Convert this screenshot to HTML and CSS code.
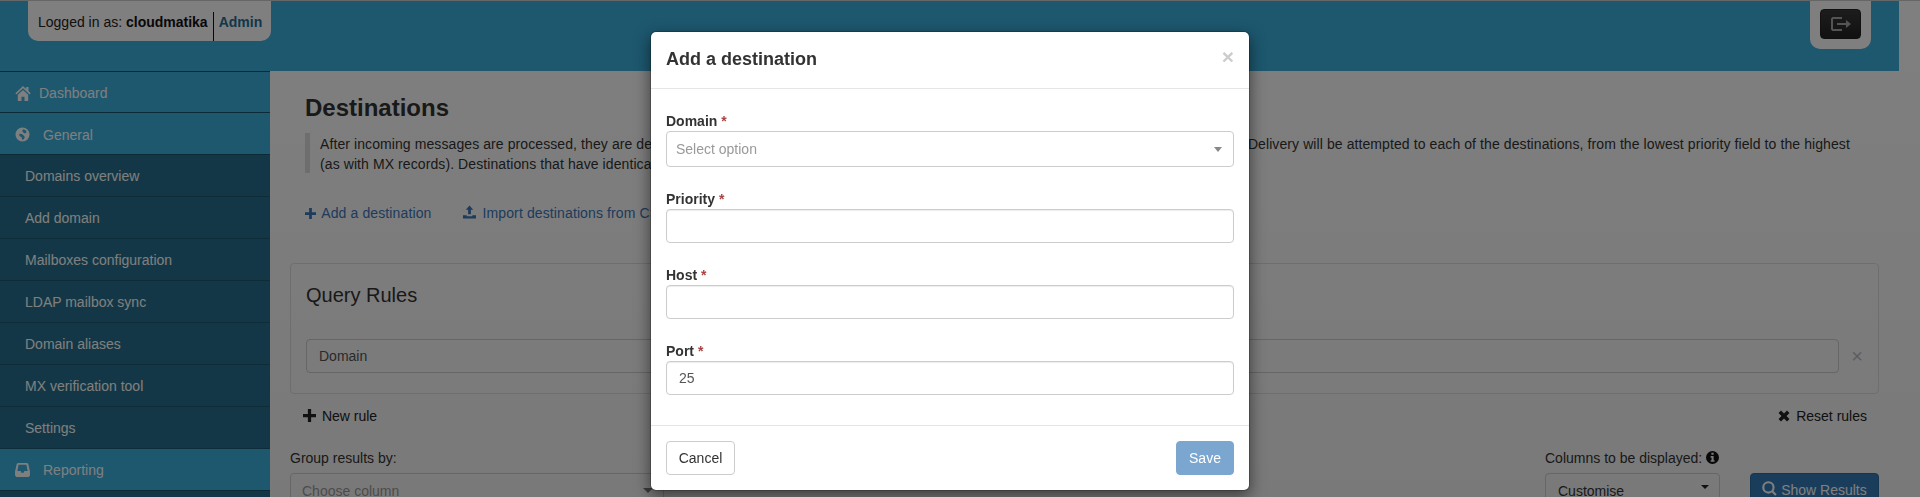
FILE: index.html
```html
<!DOCTYPE html>
<html lang="en">
<head>
    <meta charset="UTF-8">
    <title>Destinations</title>
    <link rel="stylesheet" href="styles.css">
</head>
<body>

<div class="top-line"></div>

<div class="page">
    <header class="topbar">
        <div class="user-box">
            <span>Logged in as: <b>cloudmatika</b></span>
            <span class="user-role">Admin</span>
        </div>
        <div class="logout-box">
            <button class="logout-btn">
                <svg class="icon" viewBox="0 0 20 14" width="20" height="14"><path fill="#a8a8a8" d="M0 1.500 1.500 0H11v2H2v10h9v2H1.500L0 12.500z"/><path fill="#a8a8a8" d="M6 6h9V3l5 4-5 4V8H6z"/></svg>
            </button>
        </div>
    </header>

    <div class="main">
        <nav class="sidebar">
            <a class="nav-item nav-first">
                <svg class="icon nav-icon" viewBox="0 0 16 15" width="16" height="15"><path fill="#fff" d="M8 0 .3 7.200l1.100 1.200L8 2.300l6.600 6.100 1.100-1.200L13.500 5.100V1h-2.300v1.900z"/><path fill="#fff" d="M8 3.900 2.800 8.700V15h3.700v-4.200h3V15h3.700V8.700z"/></svg>
                Dashboard
            </a>
            <a class="nav-item nav-gap nav-top">
                <svg class="icon nav-icon" viewBox="0 0 16 16" width="15" height="15"><path fill="#fff" fill-rule="evenodd" d="M8 .5a7.500 7.500 0 1 0 0 15 7.500 7.500 0 0 0 0-15zM9 2.500l2.800 1.200.4 2.300-1.700.8-1.700-1L7.600 4zM4.500 7.200l2.800.3 2.500 2 .6 1.800-1.600 2.400-1.300-.4-.4-2.300-2.300-1.500z"/></svg>
                General
            </a>
            <a class="sub-item">Domains overview</a>
            <a class="sub-item">Add domain</a>
            <a class="sub-item">Mailboxes configuration</a>
            <a class="sub-item">LDAP mailbox sync</a>
            <a class="sub-item">Domain aliases</a>
            <a class="sub-item">MX verification tool</a>
            <a class="sub-item">Settings</a>
            <a class="nav-item nav-gap">
                <svg class="icon nav-icon" viewBox="0 0 16 15" width="15" height="14"><path fill="#fff" fill-rule="evenodd" d="M3 0h10l1.200 1.200L16 9v4.500L14.500 15h-13L0 13.500V9l1.800-7.800zM3.800 2 2.500 8.500H6l.8 2h2.400l.8-2h3.500L12.200 2z"/></svg>
                Reporting
            </a>
        </nav>

        <main class="content">
            <h1>Destinations</h1>
            <blockquote class="note">
                After incoming messages are processed, they are delivered to one or more destinations that are set up for the domain, in line with the routing rules. Delivery will be attempted to each of the destinations, from the lowest priority field to the highest<br>
                (as with MX records). Destinations that have identical priority values will be tried in a random order.
            </blockquote>

            <div class="actions">
                <a class="action">
                    <svg class="icon" viewBox="0 0 12 12" width="11" height="11"><path fill="currentColor" d="M4.500 0h3v4.500H12v3H7.500V12h-3V7.500H0v-3h4.500z"/></svg>
                    Add a destination
                </a>
                <a class="action">
                    <svg class="icon" viewBox="0 0 14 14" width="13" height="14"><path fill="currentColor" d="M7 0l4 4.500H8.500V9.500h-3V4.500H3zM0 10.500h4v1.200h6v-1.200h4V14H0z"/></svg>
                    Import destinations from CSV
                </a>
            </div>

            <section class="rules">
                <h2>Query Rules</h2>
                <div class="rule-row">
                    <div class="rule-field">Domain</div>
                    <span class="rule-remove">&times;</span>
                </div>
            </section>

            <div class="rule-actions">
                <a class="rule-link">
                    <svg class="icon" viewBox="0 0 12 12" width="13" height="13"><path fill="currentColor" d="M4.500 0h3v4.500H12v3H7.500V12h-3V7.500H0v-3h4.500z"/></svg>
                    New rule
                </a>
                <a class="rule-link">
                    <svg class="icon" viewBox="0 0 12 12" width="12" height="12"><path fill="currentColor" d="M3 .5 6 3.500 9 .5 11.500 3l-3 3 3 3L9 11.500l-3-3-3 3L.5 9l3-3-3-3z"/></svg>
                    Reset rules
                </a>
            </div>

            <div class="filters">
                <div class="filter-group">
                    <label>Group results by:</label>
                    <div class="fake-select muted">Choose column<i class="caret caret-gray"></i></div>
                </div>
                <div class="filter-columns">
                    <label>Columns to be displayed:
                        <svg class="icon" viewBox="0 0 14 14" width="13" height="13"><path fill="#111" fill-rule="evenodd" d="M7 0a7 7 0 1 0 0 14A7 7 0 0 0 7 0zM5.800 2h2.400v2H5.800zM5 5.500h3.200V10H9.200v1.700H5V10h1V7.200H5z"/></svg>
                    </label>
                    <div class="fake-select">Customise<i class="caret"></i></div>
                </div>
                <button class="show-btn">
                    <svg class="icon" viewBox="0 0 14 14" width="15" height="15"><path fill="none" stroke="currentColor" stroke-width="2" d="M6 1.200a4.800 4.800 0 1 0 0 9.600 4.800 4.800 0 0 0 0-9.600zM9.500 9.500l3.500 3.500"/></svg>
                    Show Results
                </button>
            </div>
        </main>
    </div>
</div>

<div class="backdrop"></div>

<div class="modal">
    <div class="modal-header">
        <h3>Add a destination</h3>
        <span class="modal-close">&times;</span>
    </div>
    <div class="modal-body">
        <div class="field">
            <label>Domain <span class="req">*</span></label>
            <div class="select-box">Select option<i class="caret-lg"></i></div>
        </div>
        <div class="field">
            <label>Priority <span class="req">*</span></label>
            <input type="text">
        </div>
        <div class="field">
            <label>Host <span class="req">*</span></label>
            <input type="text">
        </div>
        <div class="field">
            <label>Port <span class="req">*</span></label>
            <input type="text" value="25">
        </div>
    </div>
    <div class="modal-footer">
        <button class="btn-cancel">Cancel</button>
        <button class="btn-save">Save</button>
    </div>
</div>

</body>
</html>
```

FILE: styles.css
```css
* {
    box-sizing: border-box;
}

html, body {
    height: 100%;
}

body {
    margin: 0;
    overflow: hidden;
    font-family: "Liberation Sans", Arial, sans-serif;
    font-size: 14px;
    line-height: 20px;
    color: #333;
    background: linear-gradient(#fff, #f3f3f3);
}

.icon {
    vertical-align: -1px;
}

.top-line {
    height: 1px;
    background: #c8ccd0;
}

.page {
    width: 1899px;
}

/* top bar */
.topbar {
    height: 70px;
    background: #3ab0de;
    display: flex;
    justify-content: space-between;
    align-items: flex-start;
    padding: 0 28px;
}

.user-box {
    width: 243px;
    height: 40px;
    padding: 11px 0 0 10px;
    background: #fff;
    border-radius: 0 0 10px 10px;
    color: #222;
    white-space: nowrap;
    display: flex;
}

.user-box b {
    color: #111;
}

.user-role {
    margin-left: 5px;
    padding-left: 5px;
    border-left: 1px solid #111;
    font-weight: bold;
    color: #246f94;
}

.logout-box {
    width: 61px;
    height: 48px;
    padding: 8px 0 0 10px;
    background: #fff;
    border-radius: 0 0 10px 10px;
}

.logout-btn {
    width: 41px;
    height: 30px;
    padding: 0;
    border: 1px solid #222;
    border-radius: 4px;
    background: linear-gradient(#3a3a3a, #222);
    display: flex;
    align-items: center;
    justify-content: center;
}

/* sidebar + content */
.main {
    display: flex;
}

.sidebar {
    width: 270px;
    flex-shrink: 0;
    background: #266f8c;
    height: 440px;
}

.nav-item, .sub-item {
    display: flex;
    align-items: center;
    height: 42px;
    border-bottom: 1px solid #17566f;
}

.nav-item {
    background: #3ab0de;
    color: #fff;
    padding-left: 15px;
}

.nav-first {
    border-top: 1px solid #17566f;
    padding-top: 2px;
}

.nav-top {
    padding-top: 2px;
}

.nav-icon {
    margin-right: 8px;
}

.nav-gap .nav-icon {
    margin-right: 13px;
}

.sub-item {
    background: #266f8c;
    color: #fff;
    padding-left: 25px;
    border-bottom-color: #1c5a73;
}

.content {
    flex: 1;
    min-width: 0;
    padding: 0 20px;
}

h1 {
    margin: 23px 0 0 15px;
    font-size: 24px;
    line-height: 28px;
    color: #333;
}

.note {
    height: 40px;
    margin: 11px 0 0 15px;
    padding: 1px 0 0 10px;
    border-left: 5px solid #ddd;
    color: #333;
    white-space: nowrap;
    letter-spacing: 0.09px;
}

.actions {
    display: flex;
    gap: 32px;
    margin: 30px 0 0 15px;
    letter-spacing: 0.12px;
}

.action {
    color: #3a77b8;
}

.action .icon {
    margin-right: 2px;
}

.rules {
    margin-top: 40px;
    height: 131px;
    padding: 21px 15px 0;
    border: 1px solid #ddd;
    border-radius: 4px;
}

h2 {
    margin: 0;
    font-size: 20px;
    font-weight: normal;
    line-height: 20px;
    color: #333;
}

.rule-row {
    display: flex;
    align-items: center;
    margin-top: 34px;
}

.rule-field {
    flex: 1;
    height: 34px;
    padding: 6px 12px;
    border: 1px solid #ccc;
    border-radius: 4px;
    color: #555;
}

.rule-remove {
    width: 24px;
    text-align: right;
    font-size: 20px;
    color: #bbb;
}

.rule-actions {
    display: flex;
    justify-content: space-between;
    margin-top: 12px;
    padding: 0 12px 0 13px;
}

.rule-link {
    color: #222;
}

.rule-link .icon {
    margin-right: 2px;
}

.filters {
    display: flex;
    align-items: flex-end;
    margin-top: 22px;
}

.filter-group {
    width: 374px;
}

.filter-columns {
    width: 175px;
    margin-left: auto;
}

.filters label {
    display: block;
    height: 20px;
    margin-bottom: 5px;
    color: #333;
    white-space: nowrap;
}

.fake-select {
    position: relative;
    height: 34px;
    padding: 7px 12px;
    border: 1px solid #ccc;
    border-radius: 4px;
    color: #333;
}

.fake-select.muted {
    padding-left: 11px;
    color: #999;
}

.caret {
    position: absolute;
    right: 10px;
    top: 11px;
    border-left: 4px solid transparent;
    border-right: 4px solid transparent;
    border-top: 4px solid #222;
}

.caret-gray {
    top: 14px;
    border-left-width: 5px;
    border-right-width: 5px;
    border-top: 5px solid #777;
}

.show-btn {
    width: 129px;
    height: 34px;
    margin-left: 30px;
    border: 1px solid #2e6da4;
    border-radius: 4px;
    background: #337ab7;
    color: #fff;
    font: inherit;
    padding: 0;
}

/* modal */
.backdrop {
    position: fixed;
    inset: 0;
    background: rgba(0, 0, 0, 0.5);
}

.modal {
    position: absolute;
    top: 31px;
    left: 650px;
    width: 600px;
    background: #fff;
    border: 1px solid rgba(0, 0, 0, 0.2);
    background-clip: padding-box;
    border-radius: 6px;
    box-shadow: 0 5px 15px rgba(0, 0, 0, 0.5);
}

.modal-header {
    height: 57px;
    padding: 14px 15px;
    border-bottom: 1px solid #e5e5e5;
    display: flex;
    justify-content: space-between;
}

.modal-header h3 {
    margin: 0;
    font-size: 18px;
    line-height: 26px;
    color: #333;
}

.modal-close {
    font-size: 21px;
    font-weight: bold;
    line-height: 20px;
    color: #ccc;
    margin-top: 1px;
}

.modal-body {
    padding: 22px 15px 30px;
    display: flex;
    flex-direction: column;
    gap: 22px;
}

.field label {
    display: block;
    font-weight: bold;
    color: #333;
}

.req {
    color: #a94442;
}

.field input {
    display: block;
    width: 100%;
    height: 34px;
    padding: 6px 12px;
    border: 1px solid #ccc;
    border-radius: 4px;
    font: inherit;
    color: #555;
    box-shadow: inset 0 1px 1px rgba(0, 0, 0, 0.075);
}

.select-box {
    position: relative;
    height: 36px;
    padding: 7px 9px;
    border: 1px solid #ccc;
    border-radius: 4px;
    color: #999;
}

.caret-lg {
    position: absolute;
    right: 11px;
    top: 15px;
    border-left: 4.5px solid transparent;
    border-right: 4.5px solid transparent;
    border-top: 5px solid #888;
}

.modal-footer {
    display: flex;
    justify-content: space-between;
    padding: 15px;
    border-top: 1px solid #e5e5e5;
}

.modal-footer button {
    height: 34px;
    border-radius: 4px;
    font: inherit;
    padding: 0;
}

.btn-cancel {
    width: 69px;
    background: #fff;
    border: 1px solid #ccc;
    color: #333;
}

.btn-save {
    width: 58px;
    background: #7aa6d0;
    border: 1px solid #7aa6d0;
    color: #fff;
    font-weight: bold;
}
```
